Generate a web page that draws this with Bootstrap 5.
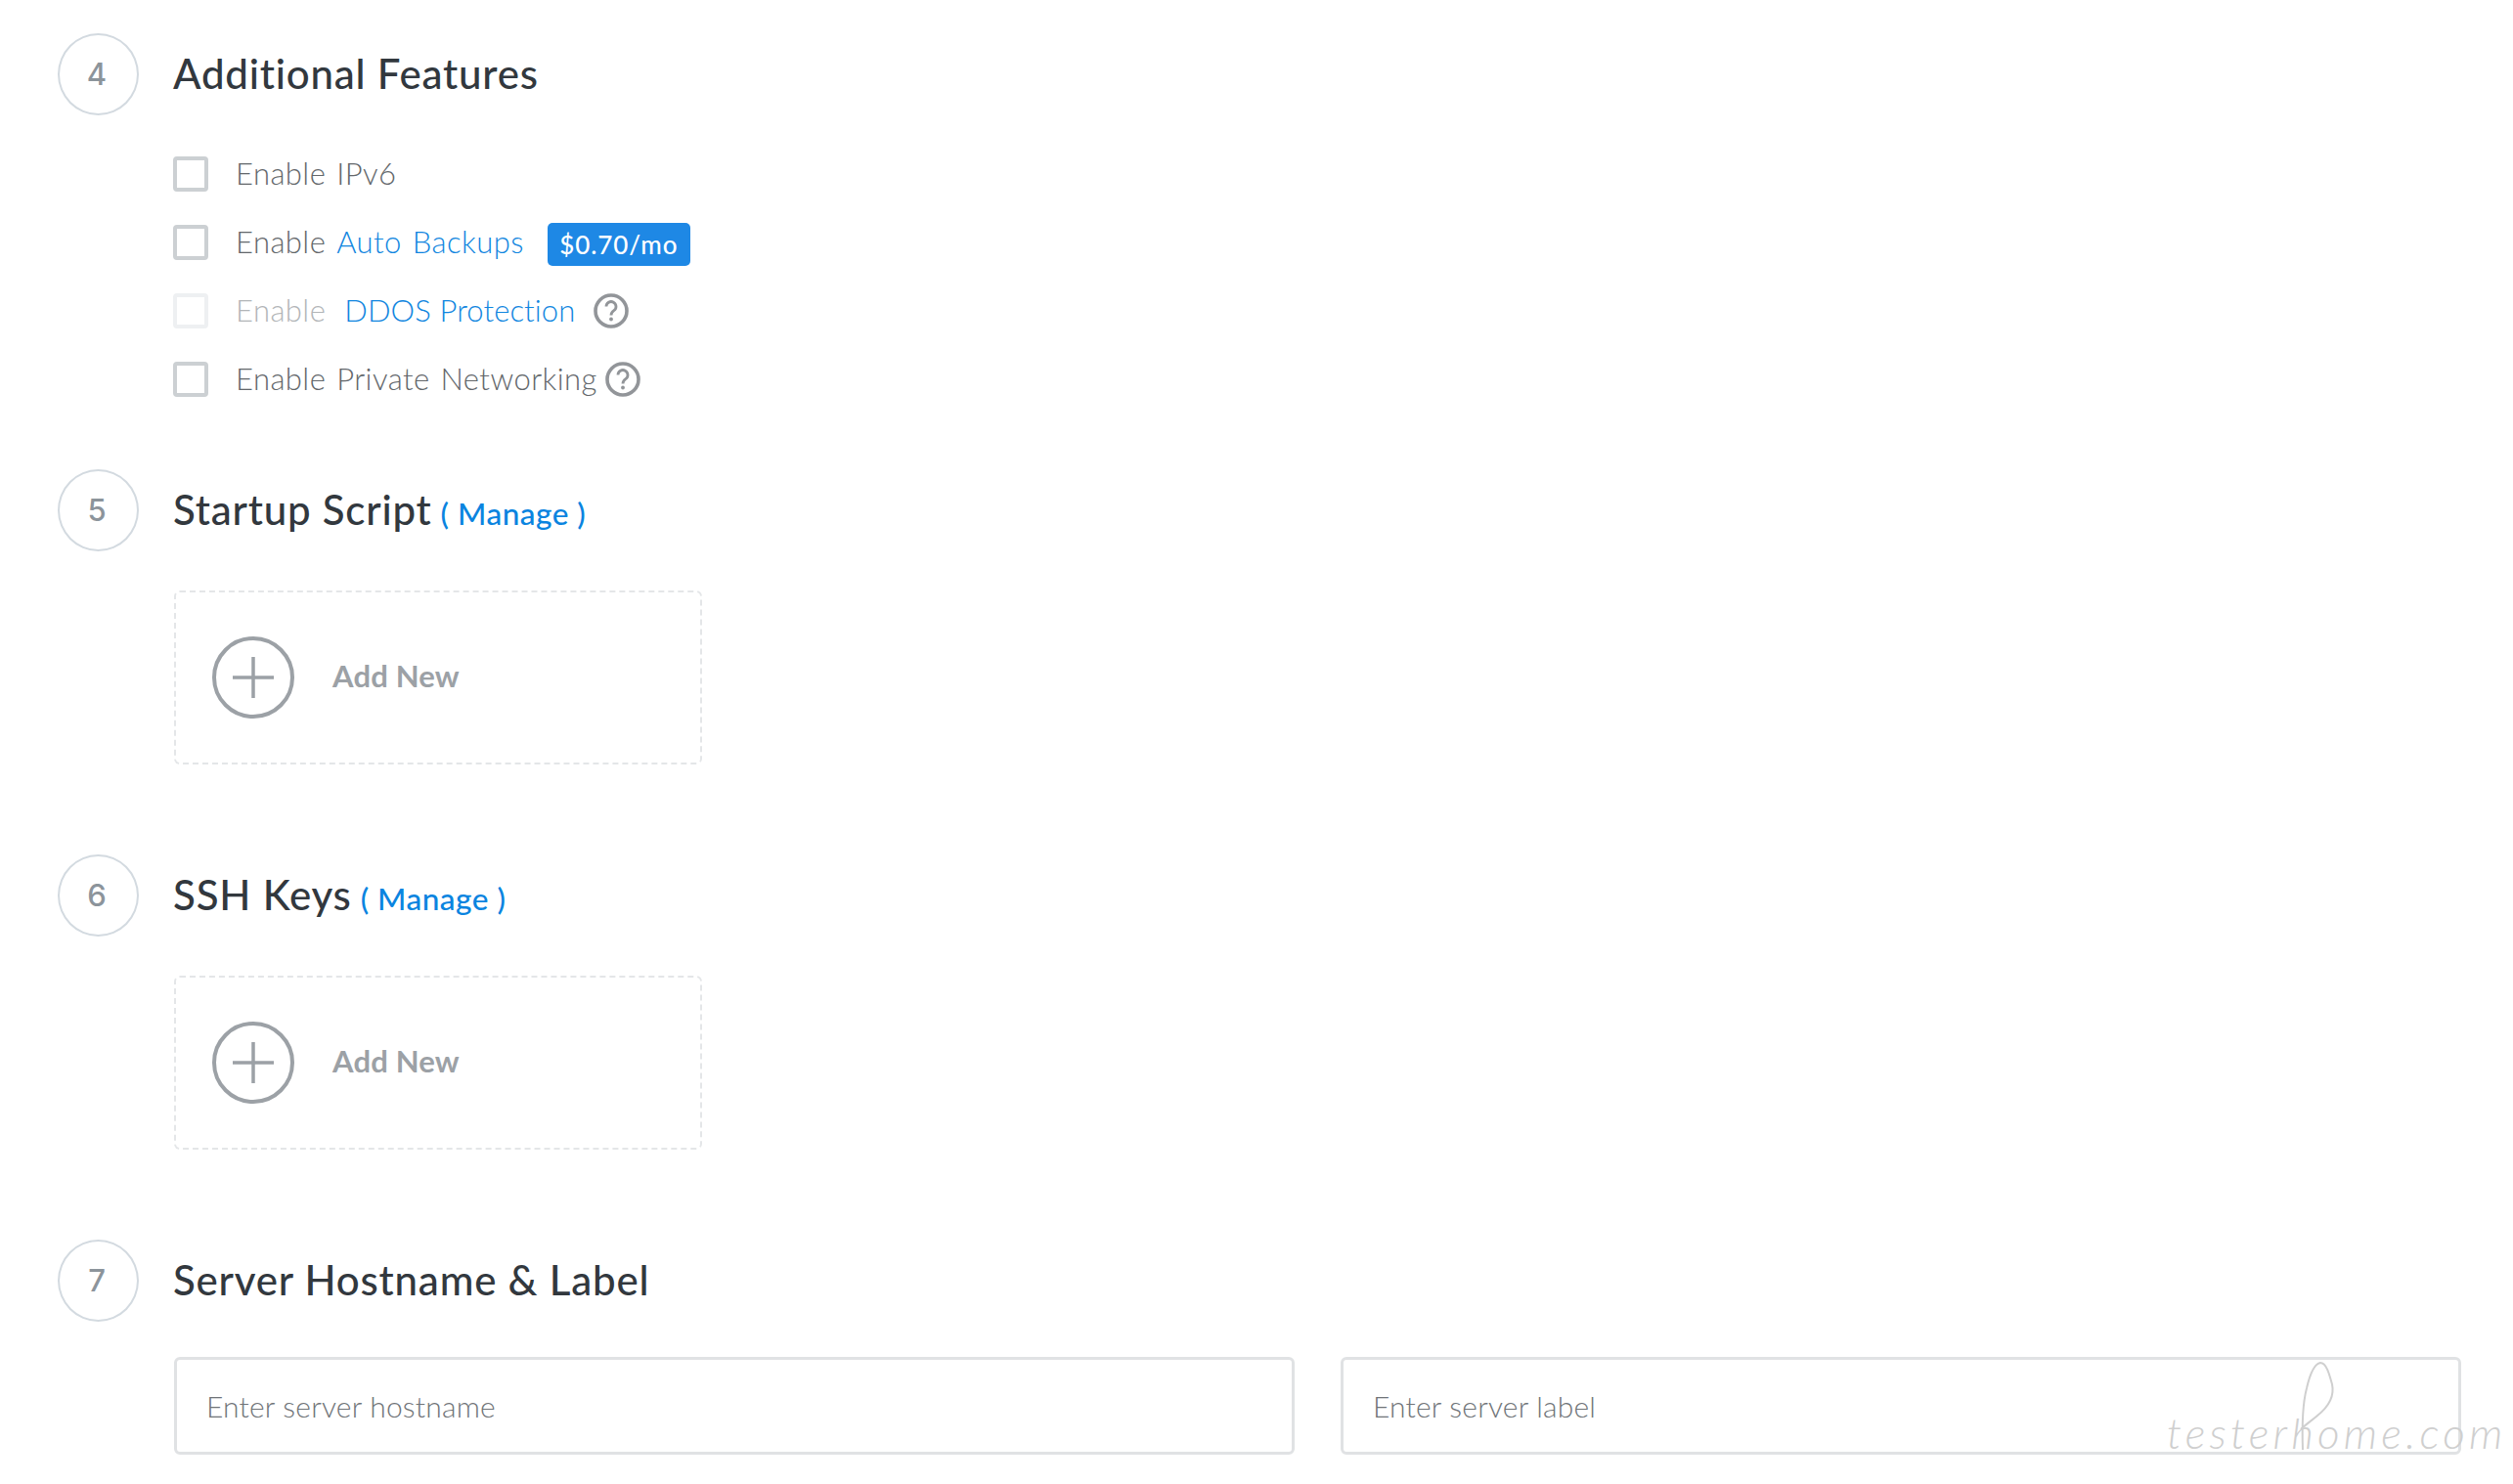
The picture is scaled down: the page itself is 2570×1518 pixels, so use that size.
<!DOCTYPE html>
<html lang="en">
<head>
<meta charset="utf-8">
<link href="https://cdn.jsdelivr.net/npm/bootstrap@5.3.0/dist/css/bootstrap.min.css" rel="stylesheet">
<style>
html,body{height:100%;background:#fff;}
body{font-family:Lato,"Open Sans","Liberation Sans",sans-serif;overflow:hidden;position:relative;color:#6c7075;}
.pagewrap{padding:34px 53px 0 59px;}
.stephead{display:flex;align-items:center;gap:35px;height:84px;}
.stepnum{width:83px;height:84px;flex:none;border:2px solid #d3dae0;border-radius:50%;display:flex;align-items:center;justify-content:center;font-family:Inter,sans-serif;font-size:31px;font-weight:500;color:#8c949b;padding-right:3px;}
.steptitle{font-size:42px;font-weight:500;color:#32383e;margin:0;padding-bottom:2px;line-height:1;letter-spacing:.8px;white-space:nowrap;}
.managelink{font-size:31.5px;font-weight:500;color:#0a84e0;text-decoration:none;margin-left:9px;letter-spacing:.5px;}
.stepbody{margin-left:119px;}
.optlist{display:flex;flex-direction:column;gap:34px;margin-left:118px;margin-top:42px;margin-bottom:74px;}
.optrow{display:flex;align-items:center;height:36px;padding-bottom:2px;font-size:31px;font-weight:300;color:#63676b;margin:0;letter-spacing:.45px;word-spacing:2px;white-space:nowrap;}
.optbox.form-check-input{align-self:flex-start;width:36px;height:36px;margin:0 28px 0 0;border:4px solid #ccd0d3;border-radius:4px;flex:none;}
.optbox.form-check-input:disabled{opacity:1;border-color:#eef0f2;}
.optrow a{color:#1186e0;text-decoration:none;}
.optrow a.ddoslink{margin-left:19px;letter-spacing:.1px;word-spacing:0;}
.dimtext{color:#b2b5b8;}
.pricetag{display:inline-flex;align-items:center;height:44px;width:146px;justify-content:center;background:#1e88e5;color:#fff;border-radius:5px;font-size:26px;font-weight:500;margin:6px 0 0 24px;letter-spacing:.9px;}
.helpicon{width:36px;height:36px;margin:2px 0 0 8px;flex:none;}
.helpicon.widegap{margin-left:19px;}
.addbox{width:540px;height:178px;margin-top:40px;border:2px dashed #e4e6e8;border-radius:6px;display:flex;align-items:center;padding-left:37px;gap:39px;}
.addbox svg{width:84px;height:84px;flex:none;}
.addlabel{font-size:31px;font-weight:700;color:#9ca1a6;letter-spacing:.2px;padding-bottom:3px;}
.gap5{margin-bottom:92px;}
.gap6{margin-bottom:92px;}
.inputrow.row{--bs-gutter-x:47px;margin-top:36px;margin-left:95.5px;}
.hostinput.form-control{height:100px;border:3px solid #e0e2e4;border-radius:6px;font-size:30px;font-weight:300;padding:0 30px;color:#63676b;letter-spacing:.2px;}
.hostinput.form-control::placeholder{color:#707478;opacity:1;}
.stampmark{position:absolute;left:2216px;top:1435px;font-family:Lato,sans-serif;font-weight:300;font-style:italic;font-size:44px;line-height:60px;letter-spacing:4.2px;color:#cfcfcf;white-space:nowrap;pointer-events:none;}
.stamploop{position:absolute;left:2345px;top:1390px;width:50px;height:95px;pointer-events:none;}
</style>
</head>
<body>
<div class="pagewrap">
  <section>
    <div class="stephead"><div class="stepnum">4</div><h2 class="steptitle">Additional Features</h2></div>
    <div class="optlist">
      <label class="optrow"><input class="form-check-input optbox" type="checkbox">Enable IPv6</label>
      <label class="optrow"><input class="form-check-input optbox" type="checkbox">Enable&nbsp;<a href="#">Auto Backups</a><span class="pricetag">$0.70/mo</span></label>
      <label class="optrow dimtext"><input class="form-check-input optbox" type="checkbox" disabled><span class="dimtext">Enable</span><a class="ddoslink" href="#">DDOS Protection</a>
        <svg class="helpicon widegap" viewBox="0 0 36 36"><circle cx="18" cy="18" r="16" fill="none" stroke="#929599" stroke-width="3.6"/><path d="M13 13.5a5 5 0 1 1 7.8 4.2c-1.8 1.2-2.8 2-2.8 4.8" fill="none" stroke="#929599" stroke-width="2.8"/><circle cx="18" cy="26.5" r="1.9" fill="#929599"/></svg></label>
      <label class="optrow"><input class="form-check-input optbox" type="checkbox">Enable Private Networking
        <svg class="helpicon" viewBox="0 0 36 36"><circle cx="18" cy="18" r="16" fill="none" stroke="#929599" stroke-width="3.6"/><path d="M13 13.5a5 5 0 1 1 7.8 4.2c-1.8 1.2-2.8 2-2.8 4.8" fill="none" stroke="#929599" stroke-width="2.8"/><circle cx="18" cy="26.5" r="1.9" fill="#929599"/></svg></label>
    </div>
  </section>
  <section class="gap5">
    <div class="stephead"><div class="stepnum">5</div><h2 class="steptitle">Startup Script<a class="managelink" href="#">( Manage )</a></h2></div>
    <div class="stepbody addbox">
      <svg viewBox="0 0 84 84"><circle cx="42" cy="42" r="40" fill="none" stroke="#9ca1a6" stroke-width="4"/><path d="M42 21v42M21 42h42" stroke="#9ca1a6" stroke-width="3.5"/></svg>
      <span class="addlabel">Add New</span>
    </div>
  </section>
  <section class="gap6">
    <div class="stephead"><div class="stepnum">6</div><h2 class="steptitle">SSH Keys<a class="managelink" href="#">( Manage )</a></h2></div>
    <div class="stepbody addbox">
      <svg viewBox="0 0 84 84"><circle cx="42" cy="42" r="40" fill="none" stroke="#9ca1a6" stroke-width="4"/><path d="M42 21v42M21 42h42" stroke="#9ca1a6" stroke-width="3.5"/></svg>
      <span class="addlabel">Add New</span>
    </div>
  </section>
  <section>
    <div class="stephead"><div class="stepnum">7</div><h2 class="steptitle">Server Hostname &amp; Label</h2></div>
    <div class="row inputrow">
      <div class="col-6"><input class="form-control hostinput" type="text" placeholder="Enter server hostname"></div>
      <div class="col-6"><input class="form-control hostinput" type="text" placeholder="Enter server label"></div>
    </div>
  </section>
</div>
<div class="stampmark">testerhome.com</div>
<svg class="stamploop" viewBox="0 0 50 95"><path d="M10 93C9 65 10 45 14 30C17 17 22 5 28 4C34 4 37 15 40 26C43 40 35 50 25 58C18 64 12 68 8 72" fill="none" stroke="#cfcfcf" stroke-width="2"/></svg>
<script src="https://cdn.jsdelivr.net/npm/bootstrap@5.3.0/dist/js/bootstrap.bundle.min.js"></script>
</body>
</html>
